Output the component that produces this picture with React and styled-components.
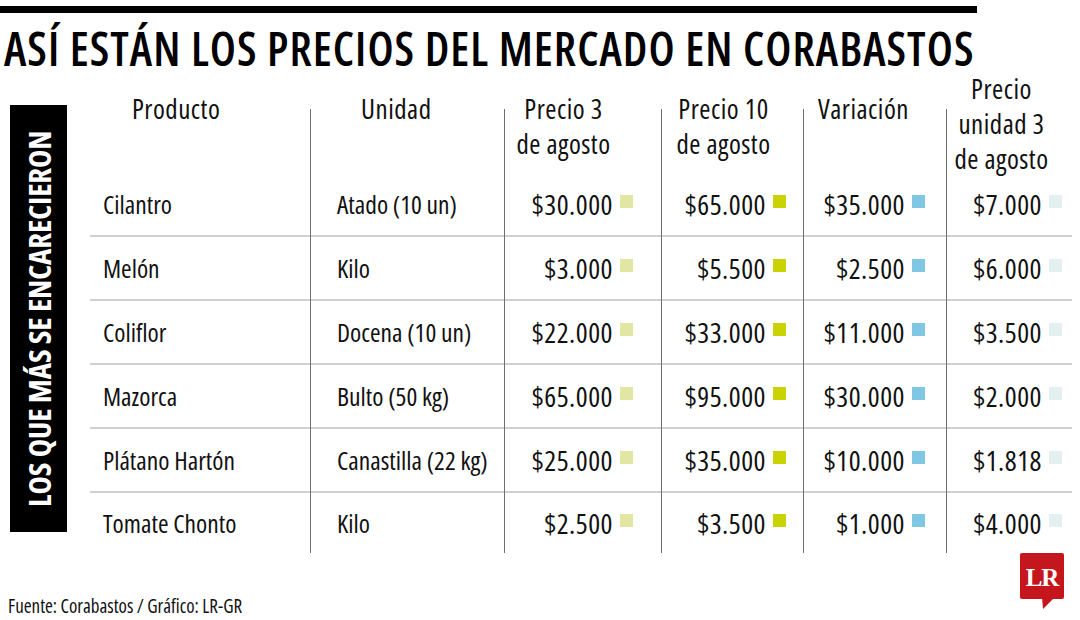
import React from "react";
import styled, { createGlobalStyle } from "styled-components";

const GlobalStyle = createGlobalStyle`
  html, body { margin: 0; padding: 0; background: #fff; }
  body { width: 1080px; height: 620px; overflow: hidden; }
`;

const FONT = `"Open Sans", "Liberation Sans", sans-serif`;

const Page = styled.div`
  width: 1080px;
  height: 620px;
  display: flex;
  flex-direction: column;
  color: #111;
  font-family: ${FONT};
  font-stretch: 75%;
`;

const TopRule = styled.div`
  width: 977px;
  height: 7px;
  margin-top: 6px;
  background: #000;
`;

const Title = styled.h1`
  margin: 9px 0 0 4px;
  font-weight: 600;
  font-size: 46px;
  line-height: 52px;
  letter-spacing: 1.05px;
  color: #000;
  white-space: nowrap;
`;

const Body = styled.div`
  display: flex;
  align-items: flex-start;
  margin-top: 31px;
`;

const SideLabel = styled.div`
  width: 57px;
  height: 427px;
  margin-left: 10px;
  background: #000;
  color: #fff;
  writing-mode: vertical-rl;
  transform: rotate(180deg);
  display: flex;
  align-items: center;
  justify-content: center;
  font-weight: 700;
  font-size: 31px;
  letter-spacing: -0.1px;
  white-space: nowrap;
`;

const Table = styled.div`
  display: flex;
  margin-left: 23px;
  margin-top: 4px;
`;

const Column = styled.div`
  box-sizing: border-box;
  width: ${(p) => p.$w}px;
  display: flex;
  flex-direction: column;
  border-left: ${(p) => (p.$line ? "1.5px solid #6e6e6e" : "none")};
`;

const HeaderCell = styled.div`
  height: 64px;
  box-sizing: border-box;
  padding-left: ${(p) => p.$pl || 0}px;
  padding-right: ${(p) => p.$pr || 0}px;
  text-align: ${(p) => p.$align || "left"};
`;

const HeaderText = styled.div`
  margin-top: ${(p) => p.$lift}px;
  font-size: 27px;
  line-height: 35px;
  letter-spacing: 0.5px;
  white-space: nowrap;
`;

const Cell = styled.div`
  box-sizing: border-box;
  height: ${(p) => (p.$last ? 60 : 64)}px;
  display: flex;
  align-items: center;
  justify-content: ${(p) => (p.$right ? "flex-end" : "flex-start")};
  padding-left: ${(p) => p.$pl || 0}px;
  padding-right: ${(p) => p.$pr || 0}px;
  border-bottom: ${(p) => (p.$last ? "none" : "2px solid #d0d0d0")};
  font-size: 25.5px;
  white-space: nowrap;
`;

const Amount = styled.span`
  font-size: 28px;
  letter-spacing: 0.5px;
`;

const Swatch = styled.span`
  width: 13px;
  height: 13px;
  margin-left: 7px;
  margin-top: -5px;
  background: ${(p) => p.$c};
  flex: none;
`;

const Footer = styled.div`
  display: flex;
  justify-content: space-between;
  align-items: flex-start;
  width: 1080px;
`;

const Source = styled.div`
  margin: 42px 0 0 8px;
  font-size: 19px;
  line-height: 22px;
  color: #111;
`;

const LogoWrap = styled.div`
  margin-right: 14px;
  line-height: 0;
`;

const Logo = () => (
  <svg width="46" height="57" viewBox="0 0 46 57">
    <rect x="0" y="0" width="44" height="46" rx="2" fill="#c4161c" />
    <polygon points="22,44 35,44 23,56" fill="#c4161c" />
    <text
      x="22"
      y="33"
      textAnchor="middle"
      fill="#fff"
      fontFamily='"Liberation Serif", "DejaVu Serif", serif'
      fontWeight="700"
      fontSize="25"
      letterSpacing="-1"
    >
      LR
    </text>
  </svg>
);

const rows = [
  ["Cilantro", "Atado (10 un)", "$30.000", "$65.000", "$35.000", "$7.000"],
  ["Melón", "Kilo", "$3.000", "$5.500", "$2.500", "$6.000"],
  ["Coliflor", "Docena (10 un)", "$22.000", "$33.000", "$11.000", "$3.500"],
  ["Mazorca", "Bulto (50 kg)", "$65.000", "$95.000", "$30.000", "$2.000"],
  ["Plátano Hartón", "Canastilla (22 kg)", "$25.000", "$35.000", "$10.000", "$1.818"],
  ["Tomate Chonto", "Kilo", "$2.500", "$3.500", "$1.000", "$4.000"],
];

const columns = [
  { w: 220, line: false, head: ["Producto"], hpl: 42, lift: -18, pl: 13 },
  { w: 194, line: true, head: ["Unidad"], hpl: 50, lift: -18, pl: 26 },
  { w: 157, line: true, head: ["Precio 3", "de agosto"], hpr: 39, center: true, lift: -18, pr: 28, color: "#e2e6a2" },
  { w: 142, line: true, head: ["Precio 10", "de agosto"], hpr: 18, center: true, lift: -18, pr: 17, color: "#c8d300" },
  { w: 143, line: true, head: ["Variación"], hpr: 23, center: true, lift: -18, pr: 21, color: "#7fc7e2" },
  { w: 126, line: true, head: ["Precio", "unidad 3", "de agosto"], hpr: 16, center: true, lift: -38, pr: 10, color: "#e4f0ef" },
];

export default function App() {
  return (
    <>
      <GlobalStyle />
      <Page>
        <TopRule />
        <Title>ASÍ ESTÁN LOS PRECIOS DEL MERCADO EN CORABASTOS</Title>
        <Body>
          <SideLabel>LOS QUE MÁS SE ENCARECIERON</SideLabel>
          <Table>
            {columns.map((col, ci) => (
              <Column key={ci} $w={col.w} $line={col.line}>
                <HeaderCell $pl={col.hpl} $pr={col.hpr} $align={col.center ? "center" : "left"}>
                  <HeaderText $lift={col.lift}>
                    {col.head.map((h, i) => (
                      <div key={i}>{h}</div>
                    ))}
                  </HeaderText>
                </HeaderCell>
                {rows.map((r, ri) => (
                  <Cell
                    key={ri}
                    $last={ri === rows.length - 1}
                    $right={!!col.color}
                    $pl={col.pl}
                    $pr={col.pr}
                  >
                    {col.color ? <Amount>{r[ci]}</Amount> : <span>{r[ci]}</span>}
                    {col.color && <Swatch $c={col.color} />}
                  </Cell>
                ))}
              </Column>
            ))}
          </Table>
        </Body>
        <Footer>
          <Source>Fuente: Corabastos / Gráfico: LR-GR</Source>
          <LogoWrap>
            <Logo />
          </LogoWrap>
        </Footer>
      </Page>
    </>
  );
}
